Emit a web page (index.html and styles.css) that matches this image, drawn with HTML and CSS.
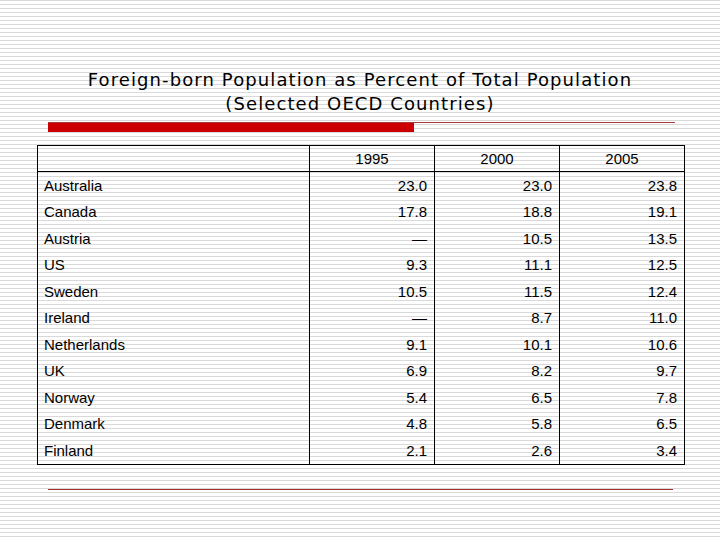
FILE: index.html
```html
<!DOCTYPE html>
<html>
<head>
<meta charset="utf-8">
<link rel="stylesheet" href="styles.css">
</head>
<body>
<div class="slide">
  <h1 class="title">Foreign-born Population as Percent of Total Population<br>(Selected OECD Countries)</h1>
  <div class="rule"><div class="rule-bar"></div></div>
  <table class="data">
    <thead>
      <tr><th class="country"></th><th>1995</th><th>2000</th><th>2005</th></tr>
    </thead>
    <tbody>
      <tr><td class="country">Australia</td><td>23.0</td><td>23.0</td><td>23.8</td></tr>
      <tr><td class="country">Canada</td><td>17.8</td><td>18.8</td><td>19.1</td></tr>
      <tr><td class="country">Austria</td><td>—</td><td>10.5</td><td>13.5</td></tr>
      <tr><td class="country">US</td><td>9.3</td><td>11.1</td><td>12.5</td></tr>
      <tr><td class="country">Sweden</td><td>10.5</td><td>11.5</td><td>12.4</td></tr>
      <tr><td class="country">Ireland</td><td>—</td><td>8.7</td><td>11.0</td></tr>
      <tr><td class="country">Netherlands</td><td>9.1</td><td>10.1</td><td>10.6</td></tr>
      <tr><td class="country">UK</td><td>6.9</td><td>8.2</td><td>9.7</td></tr>
      <tr><td class="country">Norway</td><td>5.4</td><td>6.5</td><td>7.8</td></tr>
      <tr><td class="country">Denmark</td><td>4.8</td><td>5.8</td><td>6.5</td></tr>
      <tr><td class="country">Finland</td><td>2.1</td><td>2.6</td><td>3.4</td></tr>
    </tbody>
  </table>
  <div class="bottom-rule"></div>
</div>
</body>
</html>
```

FILE: styles.css
```css
html, body {
  margin: 0;
  padding: 0;
}

.slide {
  width: 720px;
  height: 540px;
  box-sizing: border-box;
  padding-top: 68px;
  background: repeating-linear-gradient(to bottom, #d9d9d9 0, #d9d9d9 1px, #ffffff 1px, #ffffff 4px);
  display: flex;
  flex-direction: column;
  overflow: hidden;
}

.title {
  margin: 0;
  font-family: "DejaVu Sans", Verdana, sans-serif;
  font-weight: normal;
  font-size: 18px;
  letter-spacing: 1.1px;
  line-height: 24px;
  text-align: center;
  color: #000;
}

.rule {
  margin: 6px 0 0 48px;
  width: 627px;
  height: 10px;
  border-top: 1px solid #a83a3a;
  box-sizing: border-box;
}

.rule-bar {
  width: 366px;
  height: 9px;
  background: #cc0000;
}

.data {
  margin: 13px 0 0 37px;
  width: 648px;
  border-collapse: collapse;
  table-layout: fixed;
  border: 1px solid #000;
  font-family: "Liberation Sans", Arial, sans-serif;
  font-size: 15px;
  color: #000;
}

.data th, .data td {
  border-left: 1px solid #000;
  border-right: 1px solid #000;
  padding: 0 7px 0 6px;
  font-weight: normal;
}

.data th {
  height: 25px;
  text-align: center;
  border-bottom: 1px solid #000;
  padding: 0;
}

.data td {
  height: 26.5px;
  text-align: right;
}

.data .country {
  width: 271px;
  text-align: left;
}

.bottom-rule {
  margin: 24px 0 0 48px;
  width: 625px;
  height: 1px;
  background: #9a3030;
}
```
